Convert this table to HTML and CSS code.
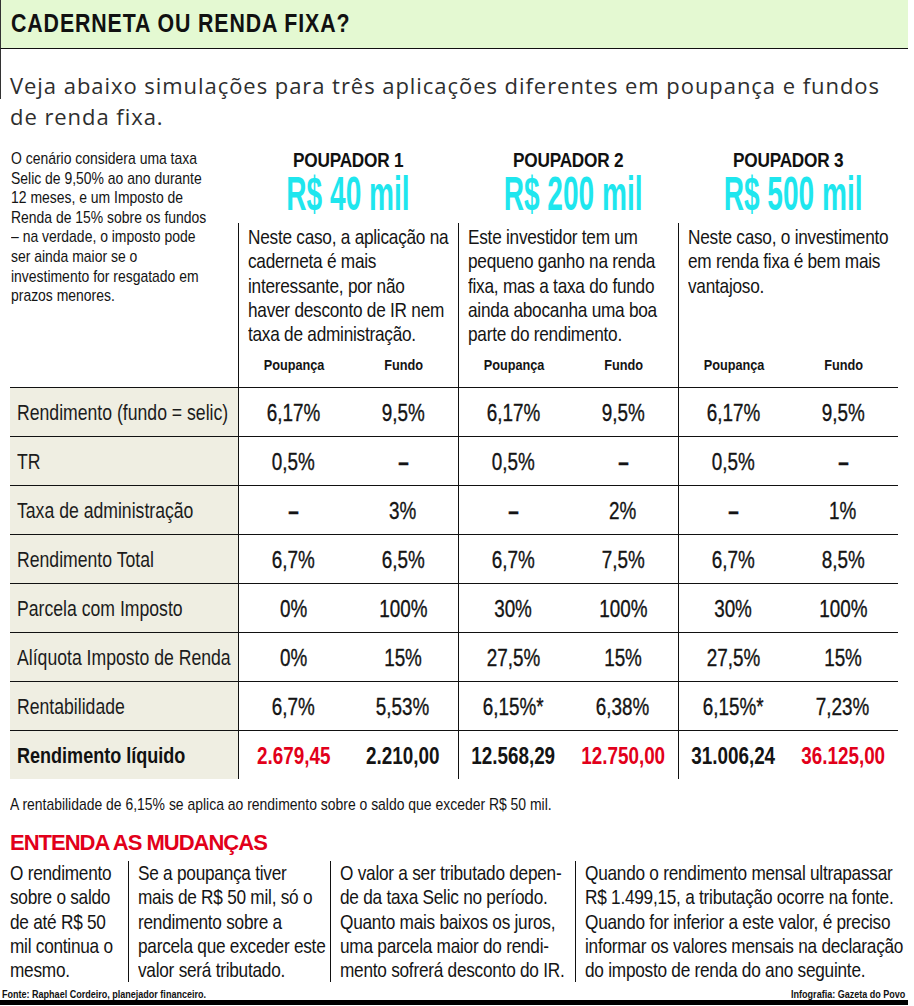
FILE: index.html
```html
<!DOCTYPE html>
<html lang="pt-BR">
<head>
<meta charset="utf-8">
<title>Caderneta ou renda fixa?</title>
<link rel="stylesheet" href="styles.css">
</head>
<body>
<div class="page">
  <header class="titlebar"><h1><span class="nx">CADERNETA OU RENDA FIXA?</span></h1></header>
  <div class="intro-l1">Veja abaixo simulações para três aplicações diferentes em poupança e fundos</div>
  <div class="intro-l2">de renda fixa.</div>

  <section class="compare">
    <p class="note"><span class="nx">O cenário considera uma taxa<br>Selic de 9,50% ao ano durante<br>12 meses, e um Imposto de<br>Renda de 15% sobre os fundos<br>– na verdade, o imposto pode<br>ser ainda maior se o<br>investimento for resgatado em<br>prazos menores.</span></p>

    <div class="saver">
      <h2><span class="nx nc">POUPADOR 1</span></h2>
      <div class="amount">R$ 40 mil</div>
      <div class="saver-body">
        <p class="desc"><span class="nx">Neste caso, a aplicação na<br>caderneta é mais<br>interessante, por não<br>haver desconto de IR nem<br>taxa de administração.</span></p>
        <div class="subhead"><span class="nx nc">Poupança</span><span class="nx nc">Fundo</span></div>
      </div>
    </div>

    <div class="saver">
      <h2><span class="nx nc">POUPADOR 2</span></h2>
      <div class="amount">R$ 200 mil</div>
      <div class="saver-body">
        <p class="desc"><span class="nx">Este investidor tem um<br>pequeno ganho na renda<br>fixa, mas a taxa do fundo<br>ainda abocanha uma boa<br>parte do rendimento.</span></p>
        <div class="subhead"><span class="nx nc">Poupança</span><span class="nx nc">Fundo</span></div>
      </div>
    </div>

    <div class="saver">
      <h2><span class="nx nc">POUPADOR 3</span></h2>
      <div class="amount">R$ 500 mil</div>
      <div class="saver-body">
        <p class="desc"><span class="nx">Neste caso, o investimento<br>em renda fixa é bem mais<br>vantajoso.</span></p>
        <div class="subhead"><span class="nx nc">Poupança</span><span class="nx nc">Fundo</span></div>
      </div>
    </div>
  </section>

  <div class="table">
    <div class="row">
      <div class="label"><span class="nx">Rendimento (fundo = selic)</span></div>
      <div class="g"><span class="nx nc">6,17%</span></div><div><span class="nx nc">9,5%</span></div>
      <div class="g"><span class="nx nc">6,17%</span></div><div><span class="nx nc">9,5%</span></div>
      <div class="g"><span class="nx nc">6,17%</span></div><div><span class="nx nc">9,5%</span></div>
    </div>
    <div class="row">
      <div class="label"><span class="nx">TR</span></div>
      <div class="g"><span class="nx nc">0,5%</span></div><div class="dash"><span class="nx nc">–</span></div>
      <div class="g"><span class="nx nc">0,5%</span></div><div class="dash"><span class="nx nc">–</span></div>
      <div class="g"><span class="nx nc">0,5%</span></div><div class="dash"><span class="nx nc">–</span></div>
    </div>
    <div class="row">
      <div class="label"><span class="nx">Taxa de administração</span></div>
      <div class="g dash"><span class="nx nc">–</span></div><div><span class="nx nc">3%</span></div>
      <div class="g dash"><span class="nx nc">–</span></div><div><span class="nx nc">2%</span></div>
      <div class="g dash"><span class="nx nc">–</span></div><div><span class="nx nc">1%</span></div>
    </div>
    <div class="row">
      <div class="label"><span class="nx">Rendimento Total</span></div>
      <div class="g"><span class="nx nc">6,7%</span></div><div><span class="nx nc">6,5%</span></div>
      <div class="g"><span class="nx nc">6,7%</span></div><div><span class="nx nc">7,5%</span></div>
      <div class="g"><span class="nx nc">6,7%</span></div><div><span class="nx nc">8,5%</span></div>
    </div>
    <div class="row">
      <div class="label"><span class="nx">Parcela com Imposto</span></div>
      <div class="g"><span class="nx nc">0%</span></div><div><span class="nx nc">100%</span></div>
      <div class="g"><span class="nx nc">30%</span></div><div><span class="nx nc">100%</span></div>
      <div class="g"><span class="nx nc">30%</span></div><div><span class="nx nc">100%</span></div>
    </div>
    <div class="row">
      <div class="label"><span class="nx">Alíquota Imposto de Renda</span></div>
      <div class="g"><span class="nx nc">0%</span></div><div><span class="nx nc">15%</span></div>
      <div class="g"><span class="nx nc">27,5%</span></div><div><span class="nx nc">15%</span></div>
      <div class="g"><span class="nx nc">27,5%</span></div><div><span class="nx nc">15%</span></div>
    </div>
    <div class="row">
      <div class="label"><span class="nx">Rentabilidade</span></div>
      <div class="g"><span class="nx nc">6,7%</span></div><div><span class="nx nc">5,53%</span></div>
      <div class="g"><span class="nx nc">6,15%*</span></div><div><span class="nx nc">6,38%</span></div>
      <div class="g"><span class="nx nc">6,15%*</span></div><div><span class="nx nc">7,23%</span></div>
    </div>
    <div class="row total">
      <div class="label"><span class="nx">Rendimento líquido</span></div>
      <div class="g red"><span class="nx nc">2.679,45</span></div><div><span class="nx nc">2.210,00</span></div>
      <div class="g"><span class="nx nc">12.568,29</span></div><div class="red"><span class="nx nc">12.750,00</span></div>
      <div class="g"><span class="nx nc">31.006,24</span></div><div class="red"><span class="nx nc">36.125,00</span></div>
    </div>
  </div>

  <p class="footnote"><span class="nx">A rentabilidade de 6,15% se aplica ao rendimento sobre o saldo que exceder R$ 50 mil.</span></p>

  <h3 class="section-title">ENTENDA AS MUDANÇAS</h3>
  <div class="changes">
    <div class="c1"><span class="nx">O rendimento<br>sobre o saldo<br>de até R$ 50<br>mil continua o<br>mesmo.</span></div>
    <div class="c2"><span class="nx">Se a poupança tiver<br>mais de R$ 50 mil, só o<br>rendimento sobre a<br>parcela que exceder este<br>valor será tributado.</span></div>
    <div class="c3"><span class="nx">O valor a ser tributado depen-<br>de da taxa Selic no período.<br>Quanto mais baixos os juros,<br>uma parcela maior do rendi-<br>mento sofrerá desconto do IR.</span></div>
    <div class="c4"><span class="nx">Quando o rendimento mensal ultrapassar<br>R$ 1.499,15, a tributação ocorre na fonte.<br>Quando for inferior a este valor, é preciso<br>informar os valores mensais na declaração<br>do imposto de renda do ano seguinte.</span></div>
  </div>

  <footer class="footer"><span class="nx">Fonte: Raphael Cordeiro, planejador financeiro.</span><span class="nx nr">Infografia: Gazeta do Povo</span></footer>
  <div class="bar"></div>
</div>
</body>
</html>
```

FILE: styles.css
```css
:root {
  --sans: "Liberation Sans", Arial, sans-serif;
  --red: #e2001a;
  --cyan: #1fe6ee;
  --line: #111;
}

html, body {
  margin: 0;
  padding: 0;
  background: #fff;
}

body {
  font-family: var(--sans);
  color: #141414;
}

.page {
  width: 914px;
  height: 1006px;
  overflow: hidden;
}

/* Narrow rendering of Liberation Sans (Arial Narrow proportions) */
.nx {
  display: inline-block;
  white-space: nowrap;
  transform: scaleX(0.82);
  transform-origin: 0 50%;
}

.nx.nc {
  transform-origin: 50% 50%;
}

.nx.nr {
  transform-origin: 100% 50%;
}

/* Title bar */
.titlebar {
  width: 907px;
  height: 48px;
  background: #e4f9d2;
  border-left: 1px solid #333;
  border-bottom: 1px solid var(--line);
}

.titlebar h1 {
  margin: 0;
  padding-left: 10px;
  font: bold 26px/46px var(--sans);
  letter-spacing: 1.1px;
  color: #111;
}

/* Intro */
.intro-l1,
.intro-l2 {
  font-family: "Open Sans", sans-serif;
  font-size: 22px;
  line-height: 28px;
  letter-spacing: 0.95px;
  color: #2e2e2e;
  white-space: nowrap;
}

.intro-l1 {
  box-sizing: border-box;
  height: 50px;
  padding: 22px 0 0 9px;
  border-left: 1px solid #333;
}

.intro-l2 {
  padding: 3px 0 0 10px;
}

/* Comparison header */
.compare {
  display: grid;
  grid-template-columns: 238px 220px 220px 220px;
  margin-top: 10px;
}

.note {
  margin: 0;
  padding: 9px 0 0 11px;
  font-size: 17px;
  line-height: 19.6px;
}

.saver {
  display: flex;
  flex-direction: column;
  padding-top: 9px;
}

.saver h2 {
  margin: 0;
  font: bold 21px/22px var(--sans);
  letter-spacing: -0.3px;
  text-align: center;
  color: #111;
}

.amount {
  margin-top: 3px;
  height: 40px;
  font: bold 48px/40px var(--sans);
  color: var(--cyan);
  text-align: center;
  white-space: nowrap;
  transform: scaleX(0.585);
}

.saver-body {
  margin-top: 9px;
  border-left: 1px solid var(--line);
}

.desc {
  box-sizing: border-box;
  height: 129px;
  margin: 0;
  padding: 2px 0 0 9px;
  font-size: 21px;
  line-height: 24.3px;
  letter-spacing: -0.3px;
}

.subhead {
  display: grid;
  grid-template-columns: 1fr 1fr;
  height: 35px;
  padding-top: 3px;
  box-sizing: border-box;
  font: bold 15.5px/20px var(--sans);
  text-align: center;
}

.subhead .nx {
  justify-self: center;
}

/* Table */
.table {
  margin-left: 10px;
}

.row {
  display: grid;
  grid-template-columns: 228px repeat(6, 110px);
}

.row > div {
  box-sizing: border-box;
  height: 49px;
  padding-top: 2px;
  border-top: 1px solid var(--line);
  display: flex;
  align-items: center;
  justify-content: center;
  font-size: 23px;
  -webkit-text-stroke: 0.35px currentColor;
}

.row > .label {
  justify-content: flex-start;
  padding-left: 7px;
  background: #efeee2;
  font-size: 21.5px;
  color: #1c1c1c;
  -webkit-text-stroke: 0;
}

.row > .g {
  border-left: 1px solid var(--line);
}

.row > .dash {
  font-weight: bold;
}

.row.total > div {
  font-weight: bold;
  -webkit-text-stroke: 0;
}

.row.total > .label {
  font-size: 22px;
  color: #111;
}

.row > .red {
  color: var(--red);
}

/* Footnote and changes */
.footnote {
  margin: 16px 0 0 10px;
  font-size: 17px;
  line-height: 20px;
}

.section-title {
  margin: 16px 0 0 10px;
  font: bold 22px/24px var(--sans);
  letter-spacing: -1px;
  color: var(--red);
}

.changes {
  display: flex;
  margin: 6px 0 0 10px;
}

.changes > div {
  box-sizing: border-box;
  font-size: 21px;
  line-height: 24.3px;
  letter-spacing: -0.3px;
}

.changes .c1 { width: 118px; }
.changes .c2 { width: 202px; }
.changes .c3 { width: 245px; }
.changes .c4 { flex: 1; }

.changes .c2,
.changes .c3,
.changes .c4 {
  padding-left: 9px;
  border-left: 1px solid var(--line);
}

/* Footer */
.footer {
  display: flex;
  justify-content: space-between;
  box-sizing: border-box;
  width: 908px;
  margin-top: 6px;
  padding: 0 3px 0 2px;
  font: bold 11px/12px var(--sans);
  color: #111;
}

.bar {
  width: 908px;
  height: 5px;
  background: #000;
}
```
